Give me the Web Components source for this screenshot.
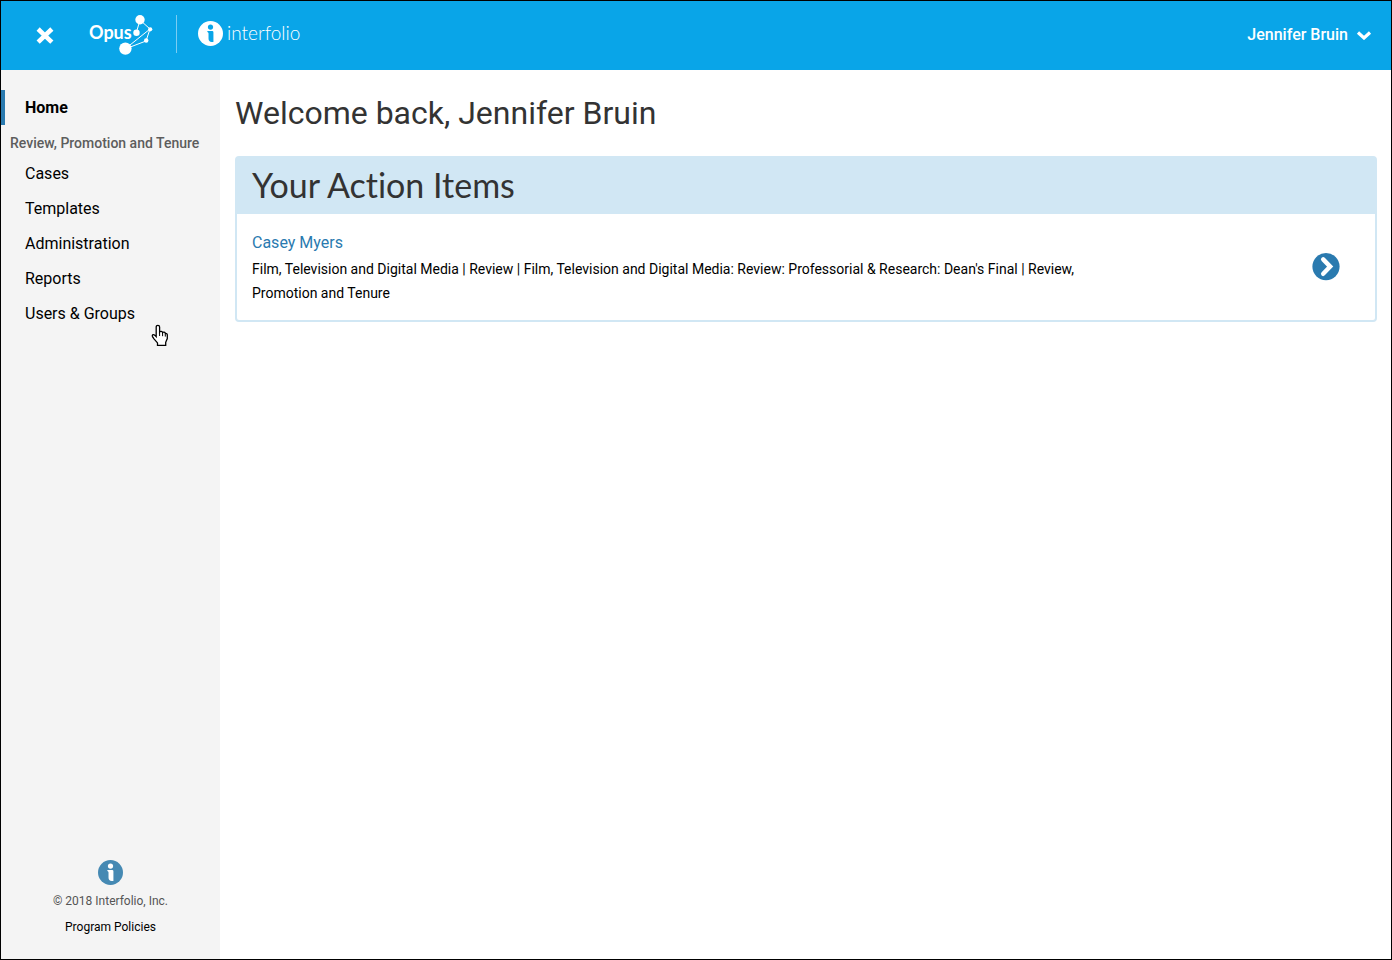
<!DOCTYPE html>
<html lang="en">
<head>
<meta charset="utf-8">
<meta name="viewport" content="width=device-width, initial-scale=1">
<title>Interfolio - Home</title>
<style>
html,body{margin:0}
body{font-family:Roboto,"Liberation Sans",sans-serif;font-size:16px;color:#000;background:#fff;--blue:#2a7aaf;--sky:#09a5e8;--pale:#d1e7f4}
</style>
</head>
<body>
<app-shell>
  <app-header slot="header" user="Jennifer Bruin"></app-header>
  <side-nav slot="nav">
    <nav-item active href="#home">Home</nav-item>
    <nav-heading>Review, Promotion and Tenure</nav-heading>
    <nav-item href="#cases">Cases</nav-item>
    <nav-item href="#templates">Templates</nav-item>
    <nav-item href="#administration">Administration</nav-item>
    <nav-item href="#reports">Reports</nav-item>
    <nav-item href="#users">Users &amp; Groups</nav-item>
    <site-footer slot="footer"></site-footer>
  </side-nav>
  <page-title>Welcome back, Jennifer Bruin</page-title>
  <action-panel>
    <span slot="title">Your Action Items</span>
    <action-item href="#case">
      <span slot="name">Casey Myers</span>
      Film, Television and Digital Media | Review | Film, Television and Digital Media: Review: Professorial &amp; Research: Dean's Final | Review, Promotion and Tenure
    </action-item>
  </action-panel>
</app-shell>
<hand-pointer></hand-pointer>
<script>
const define = (name, html, setup) => customElements.define(name, class extends HTMLElement {
  constructor() {
    super();
    const t = document.createElement('template');
    t.innerHTML = html;
    this.attachShadow({mode: 'open'}).append(t.content.cloneNode(true));
  }
  connectedCallback() { if (setup) setup(this, this.shadowRoot); }
});
const passHref = (el, root) => root.querySelectorAll('a').forEach(a => a.href = el.getAttribute('href') || '#');

define('app-shell', `
<style>
:host{display:grid;grid-template:69px 1fr / 219px minmax(0,1fr);min-height:100vh;box-sizing:border-box;border:1px solid #000}
slot[name=header]::slotted(*){grid-column:1 / -1}
main{padding:23px 14px 24px 15px}
</style>
<slot name="header"></slot><slot name="nav"></slot><main><slot></slot></main>`);

define('info-mark', `
<style>:host{display:block;width:25px;height:25px}svg{display:block;width:100%;height:100%}</style>
<svg viewBox="0 0 24 24" aria-hidden="true">
<circle cx="12" cy="12" r="12" fill="currentColor"/>
<g fill="var(--ink,#fff)"><circle cx="12" cy="5.8" r="2.5"/><path d="M9 9.6h4.6q1.2 0 1.2 1.2v9.3h-1.6q-3.1 0-3.1-3.2v-4.8q0-.8-.7-1.2l-.4-.3z"/></g>
</svg>`);

define('opus-logo', `
<style>
:host{display:block;position:relative;width:64px;height:42px}
span{display:block;font:bold 18px/36px Lato,sans-serif}
svg{position:absolute;left:0;top:0}
</style>
<span>Opus</span>
<svg width="66" height="42" viewBox="0 0 66 42" aria-hidden="true">
<path d="M47.5 18 51 6l10 9-4 12-21 8 25-20" fill="none" stroke="#fff"/>
<g fill="#fff"><circle cx="51" cy="5.7" r="4.7"/><circle cx="47.5" cy="18.8" r="3.2"/><circle cx="61.2" cy="15.3" r="2.1"/><circle cx="57.2" cy="26.5" r="2.2"/><circle cx="36.4" cy="34.6" r="6.2"/></g>
</svg>`);

define('app-header', `
<style>
:host{display:flex;align-items:flex-start;background:var(--sky);color:#fff;padding:0 19px 0 35px;box-sizing:border-box}
button{font:500 16px/20px Roboto,sans-serif;background:none;border:0;padding:0;color:inherit;cursor:pointer;display:flex;align-items:center}
svg{display:block}
.close{margin-top:26px}
.brand{display:flex;color:inherit;text-decoration:none;margin-top:13px;margin-left:35px}
.rule{width:1px;height:38px;background:#7acdf3;margin-top:1px}
.inter{display:flex;align-items:center;gap:4px;height:38px;font:300 19px/36px Lato,sans-serif;margin-left:21px}
opus-logo{margin-right:23px}
info-mark{--ink:var(--sky)}
.user{margin:24px 0 0 auto;gap:8px}
</style>
<button class="close" aria-label="Close menu"><svg width="18" height="17" viewBox="0 0 18 17"><path d="M3.8 3.6 14.2 13.6M14.2 3.6 3.8 13.6" stroke="#fff" stroke-width="4.6" stroke-linecap="square"/></svg></button>
<a class="brand" href="#home"><opus-logo></opus-logo><div class="rule"></div><div class="inter"><info-mark></info-mark><span>interfolio</span></div></a>
<button class="user"><span></span><svg width="16" height="10" viewBox="0 0 16 10" aria-hidden="true"><path d="m2 2.5 6 5.5 6-5.5" fill="none" stroke="#fff" stroke-width="3.2"/></svg></button>`,
(el, root) => root.querySelector('.user span').textContent = el.getAttribute('user'));

define('side-nav', `
<style>
:host{display:flex;flex-direction:column;justify-content:space-between;background:#f4f4f4;padding:20px 0 22px;box-sizing:border-box}
nav{display:block}
</style>
<nav><slot></slot></nav><slot name="footer"></slot>`);

define('nav-item', `
<style>
:host{display:block}
a{display:block;box-sizing:border-box;line-height:35px;padding-left:20px;border-left:4px solid transparent;color:#000;text-decoration:none}
:host([active]) a{font-weight:700;border-color:var(--blue)}
</style>
<a><slot></slot></a>`, passHref);

define('nav-heading', `
<style>:host{display:block;font-weight:500;font-size:14px;line-height:20px;color:#5d5d5d;padding:8px 0 3px 9px;white-space:nowrap}</style>
<slot></slot>`);

define('site-footer', `
<style>
:host{display:flex;flex-direction:column;align-items:center;font-size:12px;line-height:20px;color:#555}
info-mark{color:#4589b3;margin-bottom:6px}
a{color:#000;text-decoration:none;margin-top:6px}
</style>
<info-mark></info-mark><span>© 2018 Interfolio, Inc.</span><a href="#policies">Program Policies</a>`);

define('page-title', `
<style>:host{display:block}h1{margin:0 0 23px;font-weight:400;font-size:32px;line-height:40px;color:#333}</style>
<h1><slot></slot></h1>`);

define('action-panel', `
<style>
:host{display:block;border:2px solid var(--pale);border-radius:4px}
h2{margin:0;padding:0 15px 2px;background:var(--pale);font:400 34px/54px Lato,sans-serif;font-variant-ligatures:none;color:#333}
</style>
<h2><slot name="title"></slot></h2><slot></slot>`);

define('action-item', `
<style>
:host{display:flex;justify-content:space-between;align-items:center;padding:15px 35px 15px 15px}
.text{width:78%}
.name{display:block;line-height:28px;color:var(--blue);text-decoration:none}
p{margin:0;font-size:14px;line-height:24px}
svg{display:block}
</style>
<div class="text"><a class="name"><slot name="name"></slot></a><p><slot></slot></p></div>
<a class="go" aria-label="Open case"><svg width="28" height="28" viewBox="0 0 28 28"><circle cx="14" cy="13.6" r="13.6" fill="var(--blue)"/><path d="m11.2 6.4 7 7.2-7 7.2" fill="none" stroke="#fff" stroke-width="4.4" stroke-linecap="round"/></svg></a>`, passHref);

define('hand-pointer', `
<style>:host{position:absolute;left:151px;top:324px;pointer-events:none}svg{display:block}</style>
<svg width="18" height="23" viewBox="0 0 18 23" aria-hidden="true"><path d="M5.2 12.6V3q0-1.7 1.7-1.7T8.6 3v5q.5-.8 1.7-.7 1.1.1 1.3 1.3.5-.7 1.5-.5 1 .2 1.2 1.3 2-.3 2 1.7v3.4l-1.6 3.8v3H6.5v-2.4L3 14.8l-1.5-2.2q-.6-1.4.6-1.9 1.2-.3 3.1 1.9z" fill="#fff" stroke="#000" stroke-width="1.3"/><path d="M8.6 8v4M11.6 9v3.2M14.3 10v2.6" stroke="#000"/></svg>`);
</script>
</body>
</html>
